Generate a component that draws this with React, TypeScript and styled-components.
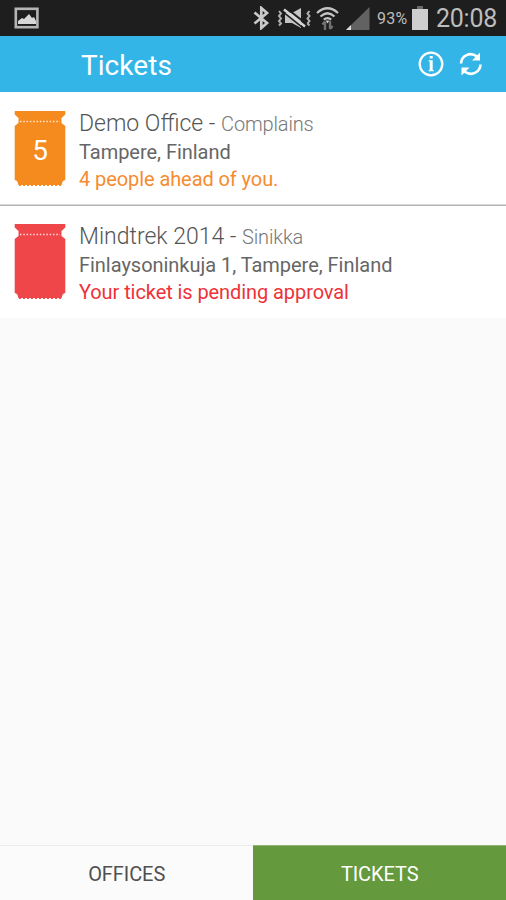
import React from 'react';
import styled, { createGlobalStyle } from 'styled-components';

const GlobalStyle = createGlobalStyle`
  * { box-sizing: border-box; }
  body { margin: 0; background: #fafafa; font-family: Roboto, "Noto Sans", sans-serif; }
`;

const Screen = styled.div`
  display: flex;
  flex-direction: column;
  width: 506px;
  height: 900px;
  background: #fafafa;
  overflow: hidden;
`;

const StatusBar = styled.header`
  display: flex;
  align-items: center;
  height: 36px;
  flex: none;
  padding: 0 8px 0 14px;
  background: #1e1e1e;
  color: #bdbdbd;
  svg { display: block; flex: none; }
`;

const Spacer = styled.div`
  flex: 1;
`;

const StatusIcons = styled.div`
  display: flex;
  align-items: center;
  height: 36px;
`;

const Percent = styled.span`
  width: 33px;
  margin-left: 7px;
  font-size: 16px;
  line-height: 36px;
  letter-spacing: 0.2px;
  padding-top: 2px;
  white-space: nowrap;
`;

const Clock = styled.time`
  width: 62px;
  margin-left: 7px;
  font-size: 25px;
  line-height: 36px;
  letter-spacing: -0.25px;
  padding-top: 1px;
  white-space: nowrap;
`;

const AppBar = styled.div`
  display: flex;
  align-items: center;
  height: 56px;
  flex: none;
  padding: 0 22px 0 81px;
  background: #33b5e7;
  color: #fff;
  svg { display: block; }
`;

const Title = styled.h1`
  flex: 1;
  margin: 0;
  padding-top: 4px;
  font-size: 28px;
  font-weight: 400;
  line-height: 36px;
  letter-spacing: 0.05px;
`;

const Action = styled.button`
  display: block;
  margin: 0 0 0 14px;
  padding: 0;
  border: 0;
  background: none;
  color: inherit;
`;

const List = styled.ul`
  flex: 1;
  margin: 0;
  padding: 0;
  list-style: none;
`;

const Row = styled.li`
  display: flex;
  height: 113px;
  padding: 18px 14px 0;
  background: #fff;
  & + & { padding-top: 17px; border-top: 1px solid #b4b4b4; box-shadow: 0 -1px 0 #d8d8d8; }
`;

const Stub = styled.div<{ $color: string }>`
  display: grid;
  width: 52px;
  height: 77px;
  color: ${(p) => p.$color};
  > * { grid-area: 1 / 1; }
`;

const Queue = styled.span`
  align-self: center;
  justify-self: center;
  padding-top: 4px;
  font-size: 28px;
  line-height: 32px;
  color: #fff;
`;

const Details = styled.div`
  display: flex;
  flex-direction: column;
  margin-left: 13px;
  white-space: nowrap;
`;

const Office = styled.div`
  height: 27px;
  font-size: 23px;
  line-height: 28px;
  font-weight: 300;
  color: #555;
`;

const Service = styled.span`
  font-size: 20px;
  color: #777;
  letter-spacing: -0.15px;
`;

const Address = styled.div`
  height: 28px;
  font-size: 20px;
  line-height: 30px;
  color: #666;
  letter-spacing: -0.03px;
`;

const State = styled.div<{ $color: string }>`
  font-size: 20px;
  line-height: 28px;
  letter-spacing: -0.08px;
  color: ${(p) => p.$color};
`;

const TabBar = styled.nav`
  display: grid;
  grid-template-columns: 253.4px 252.6px;
  height: 55px;
  flex: none;
`;

const Tab = styled.button<{ $active?: boolean }>`
  border: 0;
  border-top: 1px solid ${(p) => (p.$active ? '#8fb574' : '#ececec')};
  padding: 2px 0 0;
  background: ${(p) => (p.$active ? '#64993e' : '#fbfbfb')};
  color: ${(p) => (p.$active ? '#fff' : '#505050')};
  font-family: inherit;
  font-size: 20px;
  letter-spacing: -0.08px;
`;

const PictureIcon = () => (
  <svg width="26" height="22" viewBox="0 0 26 22">
    <rect x="1.8" y="1.8" width="21.6" height="18.4" fill="none" stroke="#b5b5b5" strokeWidth="2.6" />
    <path d="M4 17v-3l4-3 2 1 5-5 3 4 2-1 2 4v3z" fill="#d8d8d8" />
  </svg>
);

const BluetoothIcon = () => (
  <svg width="17" height="24" viewBox="0 0 17 24">
    <path d="M1.5 6.5 14 17l-5.7 5V2L14 7 1.5 17.5" fill="none" stroke="#c9c9c9" strokeWidth="2.7" />
  </svg>
);

const MutedIcon = () => (
  <svg width="35" height="22" viewBox="0 0 35 22">
    <path d="M2 4l2 2.500-2 2.500 2 2.500-2 2.500 2 2.500-2 2M32.500 4l-2 2.500 2 2.500-2 2.500 2 2.500-2 2.500 2 2" fill="none" stroke="#b0b0b0" strokeWidth="2" />
    <path d="M8 6h7l9-5v20l-9-5H8z" fill="#c4c4c4" />
    <path d="M8.500 0.500l21 16.500" stroke="#1e1e1e" strokeWidth="2" />
    <path d="M7 2.500l21 17" stroke="#d6d6d6" strokeWidth="2.500" />
    <path d="M6 4.800l20 16" stroke="#1e1e1e" strokeWidth="1.500" />
  </svg>
);

const WifiIcon = () => (
  <svg width="23" height="25" viewBox="0 0 23 25">
    <path d="M1 7Q11.5-2.500 22 7M4.500 10.500Q11.500 4 18.500 10.500M7.800 13.700Q11.500 10.500 15.200 13.700" fill="none" stroke="#c5c5c5" strokeWidth="2.2" />
    <path d="M9.500 14.500h4l-2 3z" fill="#ccc" />
    <path d="M9 24v-8.500m-2.600 3L9 15.500M14 15v8m2.600-3L14 23" fill="none" stroke="#707070" strokeWidth="2.4" />
  </svg>
);

const SignalIcon = () => (
  <svg width="24" height="24" viewBox="0 0 24 24">
    <path d="M0 23 23.500 0V23z" fill="#626262" />
    <path d="M0 23l5-5v5z" fill="#ddd" />
  </svg>
);

const BatteryIcon = () => (
  <svg width="16" height="24" viewBox="0 0 16 24">
    <path d="M5 0h6v3H5z" fill="#6a6a6a" />
    <path d="M0 3h16v21H0z" fill="#cfcfcf" />
  </svg>
);

const InfoIcon = () => (
  <svg width="26" height="26" viewBox="0 0 26 26">
    <circle cx="13" cy="13" r="11.300" fill="none" stroke="currentColor" strokeWidth="2.300" />
    <path d="M11.700 5h3v2.500h-3zM10.700 9.300h4V19h1v1.200h-5V19h1v-8.500h-1z" fill="currentColor" />
  </svg>
);

const RefreshIcon = () => (
  <svg width="26" height="26" viewBox="0 0 26 26">
    <path d="M3 12.500C3.500 4.500 12 .5 19 5.500M22.500 13.500C22 21.500 13.500 25.500 6.500 20.500" fill="none" stroke="currentColor" strokeWidth="2.700" />
    <path d="M22 1.500v8h-8zM3.500 24.500v-8h8z" fill="currentColor" />
  </svg>
);

const TicketShape = () => (
  <svg width="52" height="77" viewBox="0 0 52 77">
    <path
      d="M.7 1h50.600v3.500L47.500 8v5l3.800 3V70q-3.300.5-3.600 5H4.300Q4 70.500.7 70V16l3.800-3V8L.7 4.500z"
      fill="currentColor"
    />
    <path d="M6 11.500h40" stroke="#fff" strokeOpacity=".8" strokeWidth="1.500" strokeDasharray="1.500 1.800" />
    <path d="M5 75.300h42" stroke="currentColor" strokeWidth="1.500" strokeDasharray="2 2" />
  </svg>
);

interface Ticket {
  office: string;
  service: string;
  address: string;
  state: string;
  color: string;
  stateColor: string;
  queue?: number;
}

const tickets: Ticket[] = [
  { office: 'Demo Office', service: 'Complains', address: 'Tampere, Finland', state: '4 people ahead of you.', color: '#f58a1f', stateColor: '#f68b30', queue: 5 },
  { office: 'Mindtrek 2014', service: 'Sinikka', address: 'Finlaysoninkuja 1, Tampere, Finland', state: 'Your ticket is pending approval', color: '#ef464a', stateColor: '#ee3238' },
];

const IconSlot = styled.div<{ $gap: number }>`
  margin-right: ${(p) => p.$gap}px;
`;

const SignalSlot = styled.div`
  padding-top: 2px;
`;

const BatterySlot = styled.div`
  margin-left: 2px;
  margin-right: 1px;
`;

export default function App() {
  return (
    <Screen>
      <GlobalStyle />
      <StatusBar>
        <PictureIcon />
        <Spacer />
        <StatusIcons>
          <IconSlot $gap={7}><BluetoothIcon /></IconSlot>
          <IconSlot $gap={4}><MutedIcon /></IconSlot>
          <IconSlot $gap={7}><WifiIcon /></IconSlot>
          <SignalSlot><SignalIcon /></SignalSlot>
          <Percent>93%</Percent>
          <BatterySlot><BatteryIcon /></BatterySlot>
          <Clock>20:08</Clock>
        </StatusIcons>
      </StatusBar>
      <AppBar>
        <Title>Tickets</Title>
        <Action aria-label="Information"><InfoIcon /></Action>
        <Action aria-label="Refresh"><RefreshIcon /></Action>
      </AppBar>
      <List>
        {tickets.map((t) => (
          <Row key={t.office}>
            <Stub $color={t.color}>
              <TicketShape />
              {t.queue !== undefined && <Queue>{t.queue}</Queue>}
            </Stub>
            <Details>
              <Office>
                {t.office} - <Service>{t.service}</Service>
              </Office>
              <Address>{t.address}</Address>
              <State $color={t.stateColor}>{t.state}</State>
            </Details>
          </Row>
        ))}
      </List>
      <TabBar>
        <Tab>OFFICES</Tab>
        <Tab $active>TICKETS</Tab>
      </TabBar>
    </Screen>
  );
}
